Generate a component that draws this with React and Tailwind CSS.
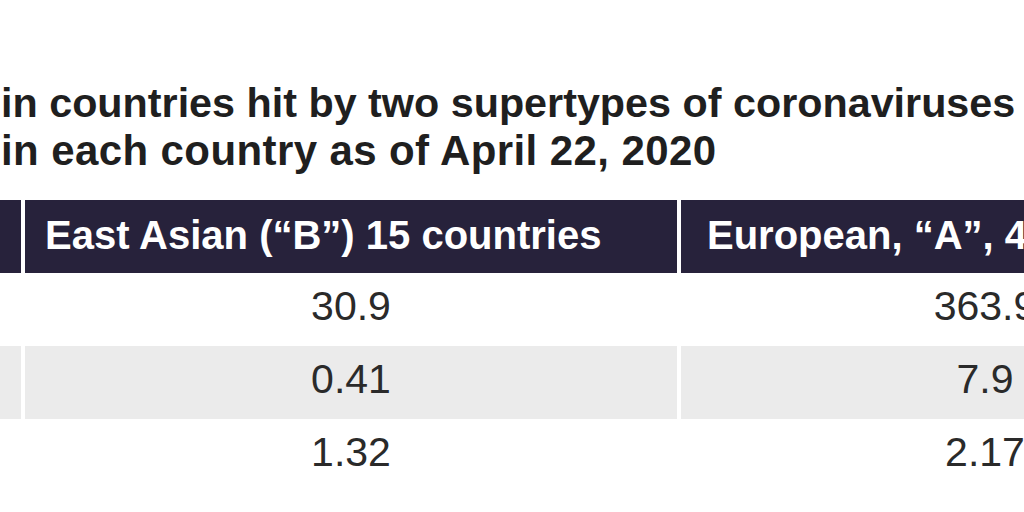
import React from 'react';

const rows = [
  { b: '30.9', a: '363.9', shade: false },
  { b: '0.41', a: '7.9', shade: true },
  { b: '1.32', a: '2.17', shade: false },
];

const App = () => {
  return (
    <div className="w-[1024px] h-[512px] overflow-hidden bg-white" style={{ fontFamily: '"Liberation Sans", Arial, sans-serif' }}>
      {/* Title */}
      <div className="pt-[79px] pl-[1px] text-[#1f1f1f] font-bold text-[42px] leading-[48px] whitespace-nowrap">
        <div className="text-[41.3px]">in countries hit by two supertypes of coronaviruses</div>
        <div className="tracking-[0.4px]">in each country as of April 22, 2020</div>
      </div>

      {/* Table */}
      <div className="mt-[25px] w-[1400px] flex flex-col">
        <div className="flex gap-[4px] h-[73px]">
          <div className="w-[21px] bg-[#27223b]" />
          <div className="w-[652px] bg-[#27223b] flex items-center pl-[20px] pb-[3px] text-white font-bold text-[40px] whitespace-nowrap">
            East Asian (“B”) 15 countries
          </div>
          <div className="w-[652px] bg-[#27223b] flex items-center pl-[26px] pb-[3px] text-white font-bold text-[40px] whitespace-nowrap">
            European, “A”, 43 countries
          </div>
        </div>
        {rows.map((r) => (
          <div key={r.b} className="flex gap-[4px] h-[73px]">
            <div className={`w-[21px] ${r.shade ? 'bg-[#ebebeb]' : 'bg-white'}`} />
            <div className={`w-[652px] flex items-center justify-center pb-[6px] text-[#2a2a2a] text-[41px] ${r.shade ? 'bg-[#ebebeb]' : 'bg-white'}`}>
              {r.b}
            </div>
            <div className={`w-[608px] flex items-center justify-center pb-[6px] text-[#2a2a2a] text-[41px] ${r.shade ? 'bg-[#ebebeb]' : 'bg-white'}`}>
              {r.a}
            </div>
          </div>
        ))}
      </div>
    </div>
  );
};

export default App;
